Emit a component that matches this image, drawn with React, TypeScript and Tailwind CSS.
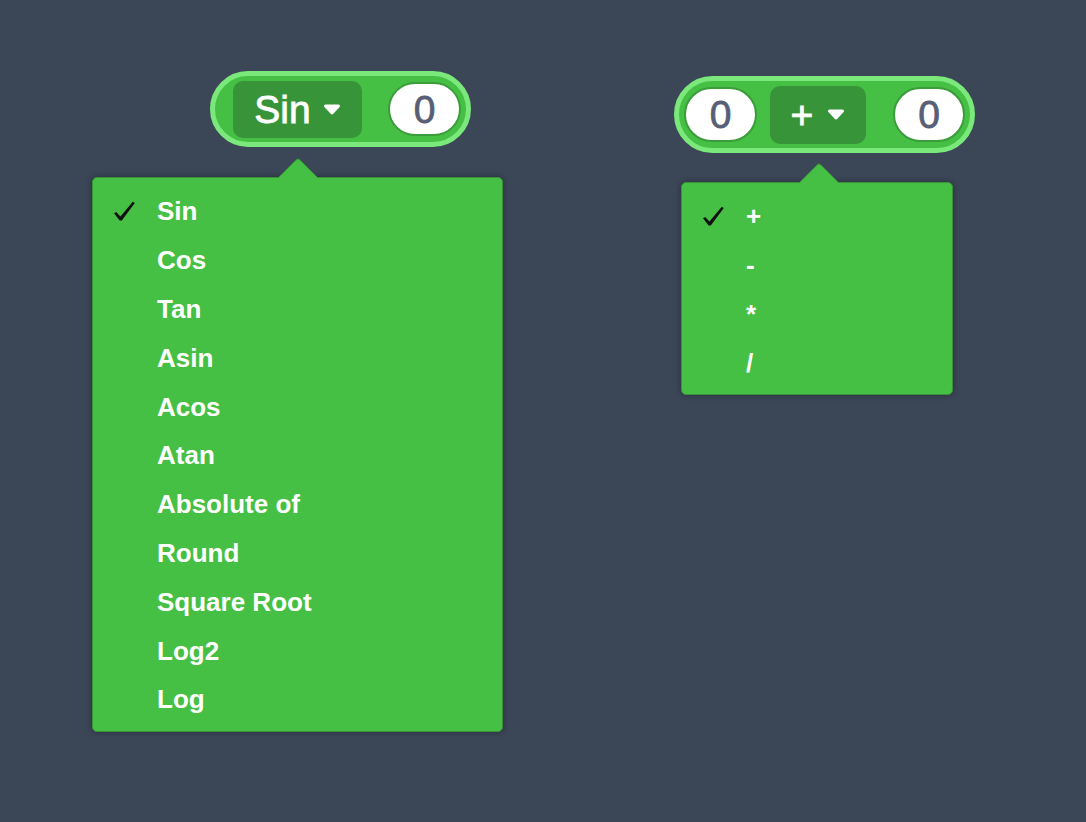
import React from "react";

const font = { fontFamily: '"Liberation Sans", Arial, sans-serif' };

function Caret() {
  return (
    <svg width="18" height="11" viewBox="0 0 18 11" className="shrink-0">
      <polygon
        points="2.5,2 15.5,2 9,9"
        fill="#ffffff"
        stroke="#ffffff"
        strokeWidth="3"
        strokeLinejoin="round"
      />
    </svg>
  );
}

function Check() {
  return (
    <svg width="23" height="21" viewBox="0 0 23 21">
      <path
        d="M1 12.2 L3.2 11 L7.4 15.4 L19.8 0.8 L21.8 2 L8.8 19.6 L6.6 19.6 Z"
        fill="#111111"
      />
    </svg>
  );
}

function NumberInput({ w, h }: { w: number; h: number }) {
  return (
    <div
      className="flex items-center justify-center rounded-full bg-white border-2 border-[#3a9c3a] text-[#575e75] text-[39px] leading-none shrink-0 [-webkit-text-stroke:0.8px]"
      style={{ width: w, height: h }}
    >
      0
    </div>
  );
}

function Field({ label, w, h, gap }: { label: string; w: number; h: number; gap: number }) {
  return (
    <div
      className="flex items-center justify-center rounded-[10px] bg-[#389438] text-white text-[39px] leading-none shrink-0 [-webkit-text-stroke:0.8px]"
      style={{ width: w, height: h, gap }}
    >
      <span>{label}</span>
      <Caret />
    </div>
  );
}

type MenuProps = {
  items: string[];
  left: number;
  top: number;
  width: number;
  arrowLeft: number;
};

function Menu({ items, left, top, width, arrowLeft }: MenuProps) {
  return (
    <div
      className="absolute rounded-[5px] bg-[#45c045] border border-[#389438] shadow-[0_0_6px_rgba(0,0,0,0.35)] pt-[9px] pb-[7px]"
      style={{ left, top, width }}
    >
      <div
        className="absolute w-[28px] h-[28px] -top-[15px] rotate-45 rounded-tl-[4px] bg-[#45c045] border-t border-l border-[#389438]"
        style={{ left: arrowLeft }}
      />
      {items.map((item, i) => (
        <div key={item} className="relative flex items-center h-[48.8px] pl-[20px]">
          <div className="w-[44px] flex items-center">{i === 0 && <Check />}</div>
          <span className="text-white font-bold text-[26px] leading-none">{item}</span>
        </div>
      ))}
    </div>
  );
}

export default function App() {
  const fns = [
    "Sin",
    "Cos",
    "Tan",
    "Asin",
    "Acos",
    "Atan",
    "Absolute of",
    "Round",
    "Square Root",
    "Log2",
    "Log",
  ];
  const ops = ["+", "-", "*", "/"];

  return (
    <div className="relative w-[1086px] h-[822px] overflow-hidden bg-[#3b4657]" style={font}>
      {/* math function block */}
      <div className="absolute left-[210px] top-[71px] h-[76px] flex items-center rounded-full border-[5px] border-[#7be87b] bg-[#45c045] pl-[18px] pr-[5px]">
        <Field label="Sin" w={129} h={57} gap={12} />
        <div className="w-[26px]" />
        <NumberInput w={73} h={54} />
      </div>

      {/* arithmetic block */}
      <div className="absolute left-[674px] top-[76px] h-[77px] flex items-center rounded-full border-[5px] border-[#7be87b] bg-[#45c045] pl-[5px] pr-[5px]">
        <NumberInput w={73} h={55} />
        <div className="w-[13px]" />
        <Field label="+" w={96} h={58} gap={14} />
        <div className="w-[27px]" />
        <NumberInput w={72} h={55} />
      </div>

      <Menu items={fns} left={92} top={177} width={411} arrowLeft={191} />
      <Menu items={ops} left={681} top={182} width={272} arrowLeft={123} />
    </div>
  );
}
